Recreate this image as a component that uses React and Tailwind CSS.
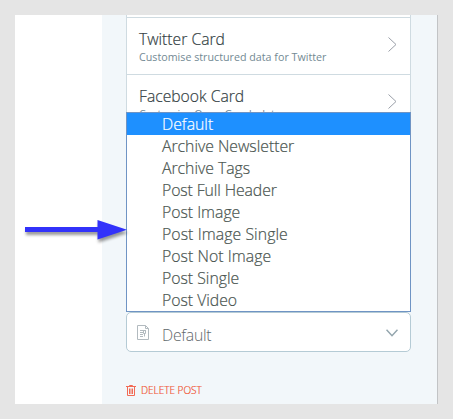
const templates = [
  { name: 'Default', style: 'tracking-[0.02px]' },
  { name: 'Archive Newsletter', style: 'tracking-[-0.02px]' },
  { name: 'Archive Tags', style: 'tracking-[-0.02px]' },
  { name: 'Post Full Header', style: 'tracking-[-0.1px]' },
  { name: 'Post Image', style: 'tracking-[-0.02px]' },
  { name: 'Post Image Single', style: 'tracking-[0.08px]' },
  { name: 'Post Not Image', style: 'tracking-[0.05px]' },
  { name: 'Post Single', style: 'tracking-[0px]' },
  { name: 'Post Video', style: 'tracking-[-0.02px]' },
];

function ChevronRight() {
  return (
    <svg className="-mt-[2px] h-[15px] w-[9px]" viewBox="0 0 9 15" fill="none" stroke="#9a9fa8" strokeWidth="1">
      <path d="M.5.5 8 7.500.5 14.500" />
    </svg>
  );
}

function CardRow({ title, hint }) {
  return (
    <div className="flex h-[57px] items-center justify-between border-t border-[#cfdbe1] pr-[13px] pb-px pl-3">
      <div className="pt-[2px]">
        <div className="text-[15.7px] leading-5 [-webkit-text-stroke:0.2px] text-[#343f44]">{title}</div>
        <div className="text-[10.700px] leading-4 font-normal tracking-[0.01px] text-[#738a94]">{hint}</div>
      </div>
      <ChevronRight />
    </div>
  );
}

function TemplateMenu() {
  return (
    <ul className="absolute top-[97px] left-[24px] w-[285px] border border-[#6f94c4] bg-white text-[15.8px] leading-[23px] [-webkit-text-stroke:0.2px] text-[#4a5550]">
      {templates.map((t, i) => (
        <li key={t.name} className={`h-[22px] pl-[35px] ${t.style} ${i === 0 ? 'bg-[#1e90ff] text-white' : ''}`}>
          {t.name}
        </li>
      ))}
    </ul>
  );
}

function Arrow() {
  return (
    <svg className="absolute top-[218px] left-[23px] h-[28px] w-[110px] drop-shadow-[1px_3px_1.5px_rgba(0,0,0,0.4)]" viewBox="23 218 110 28">
      <path d="M25 227h72.5v-7L127 229.7 97.5 239.5V232H25z" fill="#3232fa" />
    </svg>
  );
}

export default function App() {
  return (
    <div className="relative h-[419px] w-[453px] overflow-hidden bg-[#e5e5e5] pt-[15px] pl-[15px] font-['Open_Sans','Noto_Sans',sans-serif] font-light">
      <div className="flex h-[389px] w-[423px] border-r border-[#c2c4c6] bg-white">
        <div className="w-[87px] shrink-0" />
        <aside className="relative flex-1 bg-[#f2f7fa] pr-[26px] pl-[24px]">
          <div className="h-[297px] w-[285px] overflow-hidden border-x border-[#cfdbe1] bg-white pt-[2px]">
            <CardRow title="Twitter Card" hint="Customise structured data for Twitter" />
            <CardRow title="Facebook Card" hint="Customise Open Graph data" />
          </div>
          <div className="flex h-[40px] w-[285px] items-center rounded-[5px] border border-[#b5cbd5] bg-white pr-[12px] pl-[10px]">
            <svg className="h-[15px] w-[12px] shrink-0" viewBox="0 0 12 15" fill="none" stroke="#b2babf" strokeWidth="1">
              <path d="M.5.5h8l3 3v11H.5zM8.500.5v3h3M3 5.500h6M3 7.500h3M3 9.500h3M3 11.500h3M6.500 5.500v3h2v-3M7.500 8.500v3" />
            </svg>
            <span className="ml-[13px] pt-[5px] text-[15.8px] leading-[22px] tracking-[-0.25px] text-[#5f686c]">Default</span>
            <svg className="mt-[2px] ml-auto h-[8px] w-[12px]" viewBox="0 0 12 8" fill="none" stroke="#93a5ad" strokeWidth="1.5">
              <path d="M.5.7 6 6.700 11.500.7" />
            </svg>
          </div>
          <button className="mt-[30px] flex items-center text-[10px] leading-4 [-webkit-text-stroke:0.2px] text-[#f05230]">
            <svg className="h-[11px] w-[10px]" viewBox="0 0 10 11" fill="none" stroke="#f26a54" strokeWidth="1">
              <path d="M0 1.500h10M3.500 1V.5h3V1M1.500 2v8.500h7V2M3.500 3.500v5.500M5 3.500v5.500M6.500 3.500v5.500" />
            </svg>
            <span className="ml-[5px]">DELETE POST</span>
          </button>
          <TemplateMenu />
        </aside>
      </div>
      <Arrow />
    </div>
  );
}
